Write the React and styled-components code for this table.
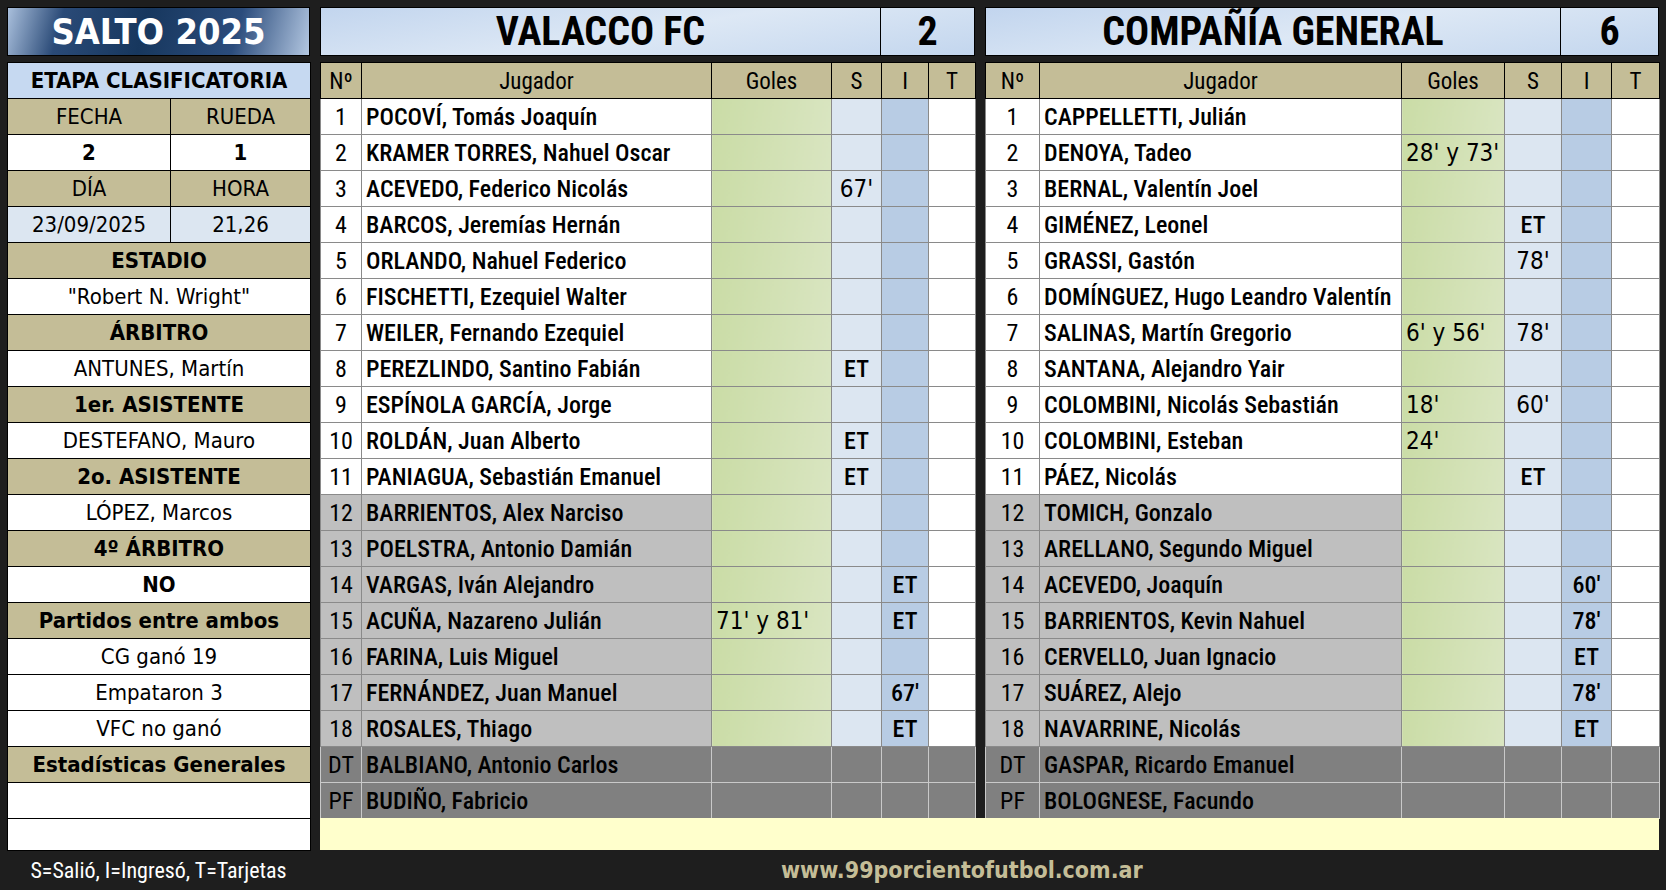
import React from "react";
import styled, { createGlobalStyle } from "styled-components";

const NARROW = `"Roboto Condensed", "Open Sans Condensed", "Liberation Sans Narrow", "DejaVu Sans Condensed", sans-serif`;
const TAHOMA = `"DejaVu Sans Condensed", "DejaVu Sans", sans-serif`;

const GlobalStyle = createGlobalStyle`
  html, body {
    margin: 0;
    padding: 0;
    background: #1e1e1e;
  }
  body {
    width: 1666px;
    height: 890px;
    overflow: hidden;
  }
`;

const Page = styled.div`
  display: flex;
  flex-direction: column;
  padding: 7px 7px 0;
  box-sizing: border-box;
  width: 1666px;
  height: 890px;
`;

const Columns = styled.div`
  display: grid;
  grid-template-columns: 303px 655px 674px;
  column-gap: 10px;
`;

const TopRow = styled(Columns)`
  height: 46px;
  margin-bottom: 9px;
`;

const Body = styled(Columns)`
  grid-template-rows: 756px 32px;
`;

const FooterRow = styled(Columns)`
  height: 40px;
  align-items: center;
`;

const TitleBox = styled.div`
  border: 1px solid #000;
  display: flex;
  align-items: center;
  justify-content: center;
  background: linear-gradient(
    105deg,
    #a9bfdc 0%,
    #2a4a77 18%,
    #17375e 45%,
    #2b4c7c 75%,
    #b3c7e1 100%
  );
  color: #fff;
  font-family: ${TAHOMA};
  font-weight: 700;
  font-size: 36px;
`;

const TeamHeader = styled.div`
  display: flex;
  border: 1px solid #000;
  background: linear-gradient(170deg, #c2d5ee 0%, #dde8f5 50%, #c3d6ee 100%);
  font-family: ${NARROW};
  font-stretch: condensed;
  font-weight: 700;
  font-size: 40px;
  color: #000;
`;

const TeamName = styled.div`
  flex: 1;
  display: flex;
  align-items: center;
  justify-content: center;
`;

const TeamScore = styled.div`
  width: ${(p) => p.$w}px;
  box-sizing: border-box;
  border-left: 1px solid #000;
  display: flex;
  align-items: center;
  justify-content: center;
`;

/* left info panel */
const Panel = styled.table`
  grid-row: 1 / span 2;
  border-collapse: collapse;
  table-layout: fixed;
  width: 303px;
  background: #fff;
  font-family: ${TAHOMA};
  font-size: 22px;
  color: #000;
`;

const PCell = styled.td`
  border: 1px solid #000;
  height: ${(p) => (p.$short ? 31 : 35)}px;
  padding: 0;
  text-align: center;
  white-space: nowrap;
  font-weight: ${(p) => (p.$bold ? 700 : 400)};
  background: ${(p) =>
    p.$tone === "tan"
      ? "#c4bd97"
      : p.$tone === "blue"
      ? "#c6d9f1"
      : p.$tone === "pale"
      ? "#dce6f1"
      : "#fff"};
`;

/* team tables */
const Table = styled.table`
  border-collapse: collapse;
  table-layout: fixed;
  width: 100%;
  height: 756px;
  font-family: ${NARROW};
  font-stretch: condensed;
  color: #000;
`;

const Th = styled.th`
  background: #c4bd97;
  border: 1px solid #000;
  height: 33px;
  padding: 2px 0 0;
  font-weight: 400;
  font-size: 23px;
  text-align: center;
`;

const fills = {
  goles: "linear-gradient(100deg, #cadca6 0%, #d9e5c1 100%)",
  s: "#dce6f1",
  i: "#b8cce4",
  t: "#fff",
};

const Td = styled.td`
  height: 35px;
  padding: 0 4px;
  border: 1px solid ${(p) => (p.$row === "staff" ? "#c9c9c9" : "#8a8a8a")};
  white-space: nowrap;
  overflow: hidden;
  font-family: ${(p) => (p.$minute ? TAHOMA : NARROW)};
  font-size: 24px;
  font-weight: ${(p) => (p.$kind === "num" || p.$minute ? 400 : 500)};
  text-align: ${(p) =>
    p.$kind === "name" || p.$kind === "goles" ? "left" : "center"};
  background: ${(p) =>
    p.$row === "staff"
      ? "#808080"
      : p.$kind === "num" || p.$kind === "name"
      ? p.$row === "sub"
        ? "#bfbfbf"
        : "#fff"
      : fills[p.$kind]};
`;

const Note = styled.div`
  grid-column: 2 / span 2;
  background: #ffffcc;
`;

const Legend = styled.div`
  text-align: center;
  font-family: ${NARROW};
  font-stretch: condensed;
  font-size: 22px;
  color: #fff;
`;

const Site = styled.div`
  grid-column: 2 / span 2;
  padding-left: 461px;
  font-family: ${TAHOMA};
  font-weight: 700;
  font-size: 23px;
  color: #c4bd97;
`;

const valacco = {
  name: "VALACCO FC",
  score: 2,
  cols: [41, 350, 120, 50, 47, 47],
  players: [
    ["1", "POCOVÍ, Tomás Joaquín"],
    ["2", "KRAMER TORRES, Nahuel Oscar"],
    ["3", "ACEVEDO, Federico Nicolás", "", "67'"],
    ["4", "BARCOS, Jeremías Hernán"],
    ["5", "ORLANDO, Nahuel Federico"],
    ["6", "FISCHETTI, Ezequiel Walter"],
    ["7", "WEILER, Fernando Ezequiel"],
    ["8", "PEREZLINDO, Santino Fabián", "", "ET"],
    ["9", "ESPÍNOLA GARCÍA, Jorge"],
    ["10", "ROLDÁN, Juan Alberto", "", "ET"],
    ["11", "PANIAGUA, Sebastián Emanuel", "", "ET"],
    ["12", "BARRIENTOS, Alex Narciso"],
    ["13", "POELSTRA, Antonio Damián"],
    ["14", "VARGAS, Iván Alejandro", "", "", "ET"],
    ["15", "ACUÑA, Nazareno Julián", "71' y 81'", "", "ET"],
    ["16", "FARINA, Luis Miguel"],
    ["17", "FERNÁNDEZ, Juan Manuel", "", "", "67'"],
    ["18", "ROSALES, Thiago", "", "", "ET"],
    ["DT", "BALBIANO, Antonio Carlos"],
    ["PF", "BUDIÑO, Fabricio"],
  ],
};

const general = {
  name: "COMPAÑÍA GENERAL",
  score: 6,
  cols: [54, 362, 103, 57, 50, 48],
  players: [
    ["1", "CAPPELLETTI, Julián"],
    ["2", "DENOYA, Tadeo", "28' y 73'"],
    ["3", "BERNAL, Valentín Joel"],
    ["4", "GIMÉNEZ, Leonel", "", "ET"],
    ["5", "GRASSI, Gastón", "", "78'"],
    ["6", "DOMÍNGUEZ, Hugo Leandro Valentín"],
    ["7", "SALINAS, Martín Gregorio", "6' y 56'", "78'"],
    ["8", "SANTANA, Alejandro Yair"],
    ["9", "COLOMBINI, Nicolás Sebastián", "18'", "60'"],
    ["10", "COLOMBINI, Esteban", "24'"],
    ["11", "PÁEZ, Nicolás", "", "ET"],
    ["12", "TOMICH, Gonzalo"],
    ["13", "ARELLANO, Segundo Miguel"],
    ["14", "ACEVEDO, Joaquín", "", "", "60'"],
    ["15", "BARRIENTOS, Kevin Nahuel", "", "", "78'"],
    ["16", "CERVELLO, Juan Ignacio", "", "", "ET"],
    ["17", "SUÁREZ, Alejo", "", "", "78'"],
    ["18", "NAVARRINE, Nicolás", "", "", "ET"],
    ["DT", "GASPAR, Ricardo Emanuel"],
    ["PF", "BOLOGNESE, Facundo"],
  ],
};

const kinds = ["num", "name", "goles", "s", "i", "t"];

const rowType = (n) =>
  isNaN(Number(n)) ? "staff" : Number(n) > 11 ? "sub" : "starter";

// minutes in the Goles and S columns are typed in the wider font
const isMinute = (kind, value) =>
  (kind === "goles" || kind === "s") && value && value !== "ET";

const TeamTable = ({ team }) => (
  <Table>
    <colgroup>
      {team.cols.map((w, i) => (
        <col key={i} style={{ width: w }} />
      ))}
    </colgroup>
    <thead>
      <tr>
        <Th>Nº</Th>
        <Th>Jugador</Th>
        <Th>Goles</Th>
        <Th>S</Th>
        <Th>I</Th>
        <Th>T</Th>
      </tr>
    </thead>
    <tbody>
      {team.players.map((p) => (
        <tr key={p[0]}>
          {kinds.map((k, i) => (
            <Td
              key={k}
              $kind={k}
              $row={rowType(p[0])}
              $minute={isMinute(k, p[i])}
            >
              {p[i] || ""}
            </Td>
          ))}
        </tr>
      ))}
    </tbody>
  </Table>
);

const Head = ({ team }) => (
  <TeamHeader>
    <TeamName>{team.name}</TeamName>
    <TeamScore $w={team.cols[4] + team.cols[5]}>{team.score}</TeamScore>
  </TeamHeader>
);

const Full = ({ children, ...rest }) => (
  <tr>
    <PCell colSpan={2} {...rest}>
      {children}
    </PCell>
  </tr>
);

const InfoPanel = () => (
  <Panel>
    <colgroup>
      <col style={{ width: 163 }} />
      <col style={{ width: 140 }} />
    </colgroup>
    <tbody>
      <Full $tone="blue" $bold>ETAPA CLASIFICATORIA</Full>
      <tr>
        <PCell $tone="tan">FECHA</PCell>
        <PCell $tone="tan">RUEDA</PCell>
      </tr>
      <tr>
        <PCell $bold>2</PCell>
        <PCell $bold>1</PCell>
      </tr>
      <tr>
        <PCell $tone="tan">DÍA</PCell>
        <PCell $tone="tan">HORA</PCell>
      </tr>
      <tr>
        <PCell $tone="pale">23/09/2025</PCell>
        <PCell $tone="pale">21,26</PCell>
      </tr>
      <Full $tone="tan" $bold>ESTADIO</Full>
      <Full>"Robert N. Wright"</Full>
      <Full $tone="tan" $bold>ÁRBITRO</Full>
      <Full>ANTUNES, Martín</Full>
      <Full $tone="tan" $bold>1er. ASISTENTE</Full>
      <Full>DESTEFANO, Mauro</Full>
      <Full $tone="tan" $bold>2o. ASISTENTE</Full>
      <Full>LÓPEZ, Marcos</Full>
      <Full $tone="tan" $bold>4º ÁRBITRO</Full>
      <Full $bold>NO</Full>
      <Full $tone="tan" $bold>Partidos entre ambos</Full>
      <Full>CG ganó 19</Full>
      <Full>Empataron 3</Full>
      <Full>VFC no ganó</Full>
      <Full $tone="tan" $bold>Estadísticas Generales</Full>
      <Full />
      <Full $short />
    </tbody>
  </Panel>
);

export default function App() {
  return (
    <>
      <GlobalStyle />
      <Page>
        <TopRow>
          <TitleBox>SALTO 2025</TitleBox>
          <Head team={valacco} />
          <Head team={general} />
        </TopRow>
        <Body>
          <InfoPanel />
          <TeamTable team={valacco} />
          <TeamTable team={general} />
          <Note />
        </Body>
        <FooterRow>
          <Legend>S=Salió, I=Ingresó, T=Tarjetas</Legend>
          <Site>www.99porcientofutbol.com.ar</Site>
        </FooterRow>
      </Page>
    </>
  );
}
